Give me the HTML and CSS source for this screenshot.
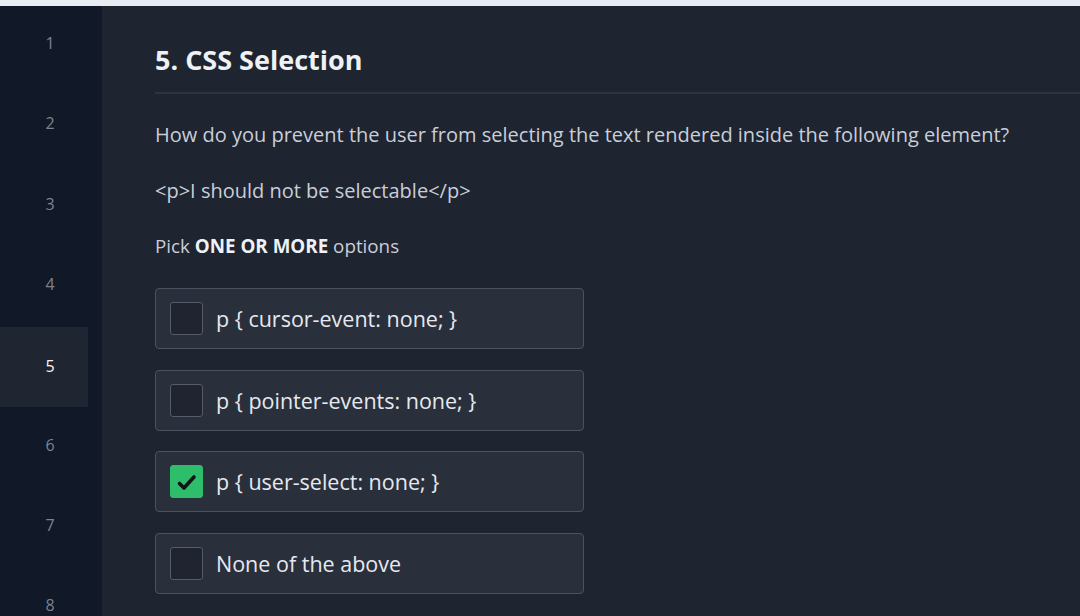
FILE: index.html
```html
<!DOCTYPE html>
<html>
<head>
<meta charset="utf-8">
<link rel="stylesheet" href="styles.css">
</head>
<body>
<div class="topbar"></div>
<div class="app">
  <nav class="sidebar">
    <div class="nav-item">1</div>
    <div class="nav-item">2</div>
    <div class="nav-item">3</div>
    <div class="nav-item">4</div>
    <div class="nav-item active">5</div>
    <div class="nav-item">6</div>
    <div class="nav-item">7</div>
    <div class="nav-item">8</div>
  </nav>
  <main class="content">
    <h1 class="title">5. CSS Selection</h1>
    <div class="divider"></div>
    <p class="question">How do you prevent the user from selecting the text rendered inside the following element?</p>
    <p class="code">&lt;p&gt;I should not be selectable&lt;/p&gt;</p>
    <p class="pick">Pick <b>ONE OR MORE</b> options</p>
    <div class="options">
      <div class="option"><span class="box"></span><span class="label">p { cursor-event: none; }</span></div>
      <div class="option"><span class="box"></span><span class="label">p { pointer-events: none; }</span></div>
      <div class="option"><span class="box checked"><svg width="30" height="30" viewBox="0 0 30 30"><path d="M7.5 16.5 L12 21 L22 10" fill="none" stroke="#111418" stroke-width="3.6" stroke-linecap="round" stroke-linejoin="round"/></svg></span><span class="label">p { user-select: none; }</span></div>
      <div class="option"><span class="box"></span><span class="label">None of the above</span></div>
    </div>
  </main>
</div>
</body>
</html>
```
FILE: styles.css
```css
* { box-sizing: border-box; }
html, body { margin: 0; padding: 0; }
body {
  width: 1080px;
  height: 616px;
  overflow: hidden;
  background: #1e2430;
  font-family: "Open Sans", "Noto Sans", sans-serif;
}
.topbar { height: 6px; background: #e9edf3; }
.app { display: flex; height: 610px; overflow: hidden; }
.sidebar {
  width: 102px;
  flex: none;
  background: #111827;
  display: flex;
  flex-direction: column;
}
.nav-item {
  height: 80.3px;
  flex: none;
  width: 88px;
  padding-left: 12px;
  padding-bottom: 6px;
  display: flex;
  align-items: center;
  justify-content: center;
  color: #7d8390;
  font-size: 16px;
}
.nav-item.active { background: #1f2531; color: #f3f4f6; padding-bottom: 2px; }
.content { flex: 1; padding-left: 53px; }
.title {
  margin: 0;
  padding-top: 37px;
  height: 86px;
  font-size: 27px;
  font-weight: 700;
  color: #eef1f6;
  line-height: 34px;
}
.divider { height: 2px; background: #2d3340; }
.question {
  margin: 26px 0 0;
  font-size: 20px;
  line-height: 30px;
  color: #c9ced8;
}
.code {
  margin: 26px 0 0;
  font-size: 20px;
  line-height: 30px;
  color: #c9ced8;
}
.pick {
  margin: 25px 0 0;
  font-size: 18.8px;
  line-height: 30px;
  color: #c9ced8;
}
.pick b { color: #eef1f6; font-weight: 700; }
.options {
  margin-top: 27px;
  display: flex;
  flex-direction: column;
  gap: 20.7px;
  width: 429px;
}
.option {
  height: 61px;
  flex: none;
  border: 1px solid #4b5161;
  border-radius: 4px;
  background: #2a2f3c;
  display: flex;
  align-items: center;
  padding-left: 14px;
  gap: 13px;
}
.box {
  width: 33px;
  height: 33px;
  flex: none;
  border: 1.5px solid #555b6a;
  border-radius: 3px;
  background: #1f2430;
  display: flex;
  align-items: center;
  justify-content: center;
}
.box.checked { background: #2ebd6b; border-color: #2ebd6b; }
.label { font-size: 21.5px; color: #e6e9ef; }
```
